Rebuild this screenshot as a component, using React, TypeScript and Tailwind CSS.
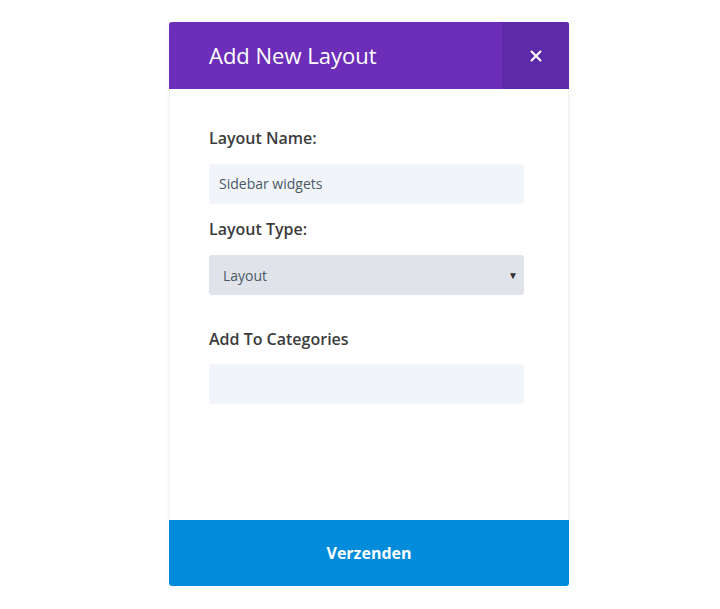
import React from "react";

export default function App() {
  return (
    <div className="w-[720px] h-[609px] bg-white pt-[22px]" style={{ fontFamily: '"Open Sans", sans-serif' }}>
      <div className="ml-[169px] w-[400px] h-[564px] flex flex-col rounded-[3px] overflow-hidden shadow-[0_0_6px_rgba(0,0,0,0.04)]">
        <div className="h-[67px] flex bg-[#6c2eb9]">
          <div className="flex-1 flex items-center pl-[40px] text-white text-[22px] leading-none pb-[1px]">Add New Layout</div>
          <div className="w-[67px] flex items-center justify-center bg-[#5f2aa8]">
            <svg width="12" height="12" viewBox="0 0 12 12">
              <path d="M1.5 1.5L10.5 10.5M10.5 1.5L1.5 10.5" stroke="white" strokeWidth="2" strokeLinecap="round" />
            </svg>
          </div>
        </div>
        <div className="flex-1 flex flex-col px-[39px] pt-[37px] border-x border-[#f2f2f2]">
          <div className="h-[24px] flex items-center text-[16px] font-semibold text-[#3c3c3c]">Layout Name:</div>
          <div className="mt-[14px] w-[315px] h-[40px] bg-[#f1f5f9] rounded-[3px] flex items-center pl-[10px] pb-[1px] text-[14px] text-[#4c5866]">Sidebar widgets</div>
          <div className="mt-[13px] h-[24px] flex items-center text-[16px] font-semibold text-[#3c3c3c]">Layout Type:</div>
          <div className="mt-[14px] w-[315px] h-[40px] bg-[#e0e4ea] rounded-[3px] flex items-center justify-between pl-[14px] pr-[6px] text-[14px] text-[#4c5866]">
            <span>Layout</span>
            <span className="text-[10px] text-[#333]">▼</span>
          </div>
          <div className="mt-[32px] h-[24px] flex items-center text-[16px] font-semibold text-[#3c3c3c]">Add To Categories</div>
          <div className="mt-[13px] w-[315px] h-[40px] bg-[#f1f5f9] rounded-[3px]"></div>
        </div>
        <div className="h-[66px] bg-[#008bdb] flex items-center justify-center text-white text-[16px] font-bold">Verzenden</div>
      </div>
    </div>
  );
}
